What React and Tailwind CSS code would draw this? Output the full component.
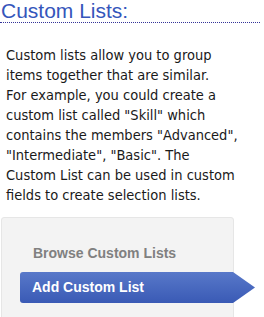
const lines = [
  'Custom lists allow you to group',
  'items together that are similar.',
  'For example, you could create a',
  'custom list called "Skill" which',
  'contains the members "Advanced",',
  '"Intermediate", "Basic". The',
  'Custom List can be used in custom',
  'fields to create selection lists.',
];

export default function App() {
  return (
    <div className="w-[264px] h-[317px] overflow-hidden bg-white">
      <div className="w-[260px] border-b border-dotted border-[#333399]">
        <h1 className="pl-[1px] text-[21px] leading-[22px] text-[#3556bb] font-['Liberation_Sans',Arial,sans-serif]">
          Custom Lists:
        </h1>
      </div>
      <p className="mt-[22px] pl-[6px] text-[14.5px] leading-[20px] text-[#1a1a1a] font-['Tahoma','DejaVu_Sans_Condensed','DejaVu_Sans',sans-serif]">
        {lines.map((l, i) => (
          <span key={i} className="block whitespace-nowrap">{l}</span>
        ))}
      </p>
      <div className="mt-[12px] ml-[1px] w-[233px] h-[120px] bg-[#f3f3f3] border border-[#e6e6e6] rounded-tl-[3px] rounded-tr-[3px] pt-[26px] font-['Liberation_Sans',Arial,sans-serif]">
        <div className="pl-[31px] text-[14px] leading-[18px] font-bold text-[#808080]">
          Browse Custom Lists
        </div>
        <div className="mt-[10px] ml-[18px] w-[235px] h-[31px] rounded-l-[3px] bg-gradient-to-b from-[#5878c9] to-[#3a5ab5] [clip-path:polygon(0_0,213px_0,100%_50%,213px_100%,0_100%)] flex items-center pl-[12px] text-[14px] font-bold text-white">
          Add Custom List
        </div>
      </div>
    </div>
  );
}
